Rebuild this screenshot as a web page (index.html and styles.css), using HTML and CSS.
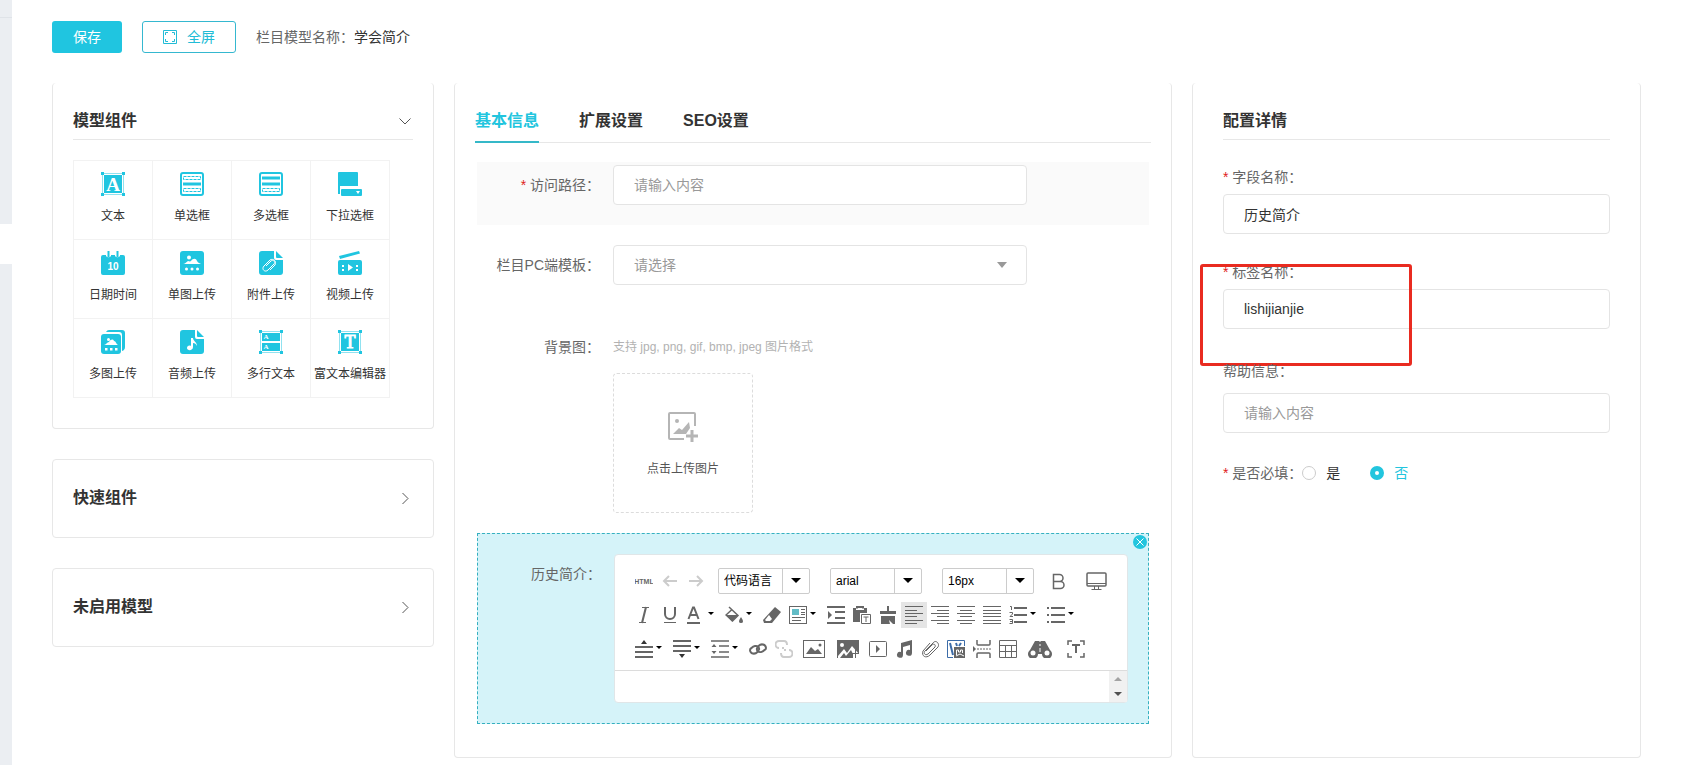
FILE: index.html
```html
<!DOCTYPE html>
<html lang="zh-CN">
<head>
    <meta charset="UTF-8">
    <meta name="viewport" content="width=device-width, initial-scale=1.0">
    <title>栏目模型</title>
    <link rel="stylesheet" href="styles.css">
</head>
<body>
    <div class="side">
        <div class="side-head"></div>
        <div class="side-menu"></div>
        <div class="side-current"></div>
        <div class="side-rest"></div>
    </div>

    <div class="page">
        <div class="topbar">
            <button class="btn btn-primary">保存</button>
            <button class="btn btn-outline">
                <svg width="14" height="14" viewBox="0 0 14 14" fill="none" stroke="currentColor"><path d="M.5.5h13v13H.5z"/><path d="M2.500 5V2.500H5M9 2.500h2.500V5M11.500 9v2.500H9M5 11.500H2.500V9"/></svg>
                全屏
            </button>
            <div class="model-name">栏目模型名称：<span>学会简介</span></div>
        </div>

        <div class="columns">
            <!-- 左侧组件 -->
            <div class="left">
                <div class="card card-cut">
                    <div class="card-title line">
                        <h3>模型组件</h3>
                        <svg width="14" height="14" viewBox="0 0 14 14" fill="none" stroke="#555"><path d="M.5 4.500 6 10l5.500-5.500"/></svg>
                    </div>
                    <ul class="widgets">
                        <li>
                            <svg viewBox="0 0 24 24"><path class="dots" d="M1.500 1.500h21v21h-21z"/><path d="M0 0h3v3H0zM21 0h3v3h-3zM0 21h3v3H0zM21 21h3v3h-3zM3 3h18v18H3z"/><text x="12" y="19" class="serif">A</text></svg>
                            <span>文本</span>
                        </li>
                        <li>
                            <svg viewBox="0 0 24 24"><rect class="ln" x="1" y="1" width="22" height="22" rx="2"/><path class="dash" d="M3.500 4.500h17v3h-17zM3.500 16.500h17v3h-17z"/><path d="M3 10.500h18v3H3z"/></svg>
                            <span>单选框</span>
                        </li>
                        <li>
                            <svg viewBox="0 0 24 24"><rect class="ln" x="1" y="1" width="22" height="22" rx="2"/><path class="dash" d="M3.500 16.500h17v3h-17z"/><path d="M3 4.500h18v3H3zM3 10.500h18v3H3z"/></svg>
                            <span>多选框</span>
                        </li>
                        <li>
                            <svg viewBox="0 0 24 24"><path d="M0 1q0-1 1-1h18q1 0 1 1v13H2v8H0zM4 17h19q1 0 1 1v5q0 1-1 1H4q-1 0-1-1v-5q0-1 1-1z"/><path class="w" d="M18 19h4l-2 3z"/></svg>
                            <span>下拉选框</span>
                        </li>
                        <li>
                            <svg viewBox="0 0 24 24"><path d="M2 4h3v1a3 3 0 0 0 5 0V4h4v1a3 3 0 0 0 5 0V4h3q2 0 2 2v16q0 2-2 2H2q-2 0-2-2V6q0-2 2-2z"/><path d="M6.500 0h2v6h-2zM15.500 0h2v6h-2z"/><text x="12" y="19" class="num">10</text></svg>
                            <span>日期时间</span>
                        </li>
                        <li>
                            <svg viewBox="0 0 24 24"><rect width="24" height="24" rx="3"/><path class="w" d="M3 13c2 0 3-2 5-3 1 0 2 1 3 0 2-3 5-3 6 0 1 2 3 2 4 3zM7 6.500a2 2 0 1 0 4 0 2 2 0 0 0-4 0M5 18a1.500 1.500 0 1 0 3 0 1.500 1.500 0 0 0-3 0M10.500 18a1.500 1.500 0 1 0 3 0 1.500 1.500 0 0 0-3 0M16 18a1.500 1.500 0 1 0 3 0 1.500 1.500 0 0 0-3 0"/></svg>
                            <span>单图上传</span>
                        </li>
                        <li>
                            <svg viewBox="0 0 24 24"><path d="M3 0h12v7q0 2 2 2h7v12q0 3-3 3H3q-3 0-3-3V3q0-3 3-3zM17 0l7 7h-6q-1 0-1-1z"/><path class="wl" d="m7 15 5-5c2-2 5 1 3 3l-6 6c-3 3-7-1-4-4l6-6c3-2 7 1 5 5l-5 5"/></svg>
                            <span>附件上传</span>
                        </li>
                        <li>
                            <svg viewBox="0 0 24 24"><path d="M1 5 21 0l1 2.500L2 8zM2 9h20q2 0 2 2v11q0 2-2 2H2q-2 0-2-2V11q0-2 2-2z"/><path class="w" d="m10 13 5 3.500-5 3.500zM4 14h2v2H4zM4 18h2v2H4zM18 14h2v2h-2zM18 18h2v2h-2z"/></svg>
                            <span>视频上传</span>
                        </li>
                        <li>
                            <svg viewBox="0 0 24 24"><path d="M5 2q1-2 3-2h13q3 0 3 3v14q0 3-3 4V5q0-3-3-3z"/><rect y="4" width="20" height="20" rx="3"/><path class="w" d="M3 15c2 0 3-3 5-3 2-3 4-3 5-1 2 0 2 3 4 4zM6 9.500a1.500 1.500 0 1 0 3 0 1.500 1.500 0 0 0-3 0M4 18h2.500v2.500H4zM9 18h2.500v2.500H9zM14 18h2.500v2.500H14z"/></svg>
                            <span>多图上传</span>
                        </li>
                        <li>
                            <svg viewBox="0 0 24 24"><path d="M3 0h12v7q0 2 2 2h7v12q0 3-3 3H3q-3 0-3-3V3q0-3 3-3zM17 0l7 7h-6q-1 0-1-1z"/><path class="w" d="M11 8h2c0 3 4 4 4 8-1-2-2-3-4-3v4c0 4-6 4-6 1 0-2 2-3 4-2z"/></svg>
                            <span>音频上传</span>
                        </li>
                        <li>
                            <svg viewBox="0 0 24 24"><path class="dots" d="M1.500 1.500h21v21h-21z"/><path d="M0 0h3v3H0zM21 0h3v3h-3zM0 21h3v3H0zM21 21h3v3h-3zM3 3h18v8H3zM3 13h18v8H3z"/><text x="7" y="9" class="mini">A</text><text x="7" y="19" class="mini">A</text></svg>
                            <span>多行文本</span>
                        </li>
                        <li>
                            <svg viewBox="0 0 24 24"><path class="dots" d="M1.500 1.500h21v21h-21z"/><path d="M0 0h3v3H0zM21 0h3v3h-3zM0 21h3v3H0zM21 21h3v3h-3zM3 3h18v18H3z"/><text x="12" y="18" class="serif thin">T</text></svg>
                            <span>富文本编辑器</span>
                        </li>
                    </ul>
                </div>

                <div class="card card-fold">
                    <div class="card-title">
                        <h3>快速组件</h3>
                        <svg width="14" height="14" viewBox="0 0 14 14" fill="none" stroke="#555"><path d="M3.500 2 9 7.500 3.500 13"/></svg>
                    </div>
                </div>
                <div class="card card-fold">
                    <div class="card-title">
                        <h3>未启用模型</h3>
                        <svg width="14" height="14" viewBox="0 0 14 14" fill="none" stroke="#555"><path d="M3.500 2 9 7.500 3.500 13"/></svg>
                    </div>
                </div>
            </div>

            <!-- 中间表单 -->
            <div class="card card-cut middle">
                <div class="tabs">
                    <a href="#" class="tab active">基本信息</a>
                    <a href="#" class="tab">扩展设置</a>
                    <a href="#" class="tab">SEO设置</a>
                </div>

                <div class="row row-gray">
                    <label for="path"><i>*</i> 访问路径：</label>
                    <input class="field" type="text" id="path" placeholder="请输入内容">
                </div>

                <div class="row row-select">
                    <label for="tpl">栏目PC端模板：</label>
                    <div class="select">
                        <select class="field" id="tpl">
                            <option>请选择</option>
                        </select>
                    </div>
                </div>

                <div class="row row-upload">
                    <label for="upload">背景图：</label>
                    <div>
                        <p class="tip">支持 jpg, png, gif, bmp, jpeg 图片格式</p>
                        <button class="upload" id="upload">
                            <svg width="32" height="32" viewBox="0 0 32 32"><path d="M28 15V3q0-1-1-1H3Q2 2 2 3v24q0 1 1 1h14" fill="none" stroke="#b5b5b5" stroke-width="2"/><circle cx="10" cy="10" r="2" fill="#b5b5b5"/><path d="m6 23 6-6 3 2 7-8 1 6-4 6z" fill="#b5b5b5"/><path d="M25 19v12M19 25h12" stroke="#b5b5b5" stroke-width="3"/></svg>
                            点击上传图片
                        </button>
                    </div>
                </div>

                <div class="row row-active">
                    <button class="close" aria-label="删除">
                        <svg width="14" height="14" viewBox="0 0 14 14"><circle cx="7" cy="7" r="7" fill="#22c5de"/><path d="m3.500 3.500 7 7m0-7-7 7" stroke="#fff"/></svg>
                    </button>
                    <label for="content">历史简介：</label>
                    <div class="editor">
                        <div class="toolbar">
                            <div class="tools first">
                                <button><svg viewBox="0 0 18 18"><text x="9" y="12" class="t-html">HTML</text></svg></button>
                                <button class="off"><svg viewBox="0 0 18 18"><path class="s2" d="M16 9H3M8 4 3 9l5 5"/></svg></button>
                                <button class="off"><svg viewBox="0 0 18 18"><path class="s2" d="M2 9h13M10 4l5 5-5 5"/></svg></button>
                                <div class="combo"><select aria-label="代码语言"><option>代码语言</option></select></div>
                                <div class="combo"><select aria-label="字体"><option>arial</option></select></div>
                                <div class="combo"><select aria-label="字号"><option>16px</option></select></div>
                                <button class="wide"><svg viewBox="0 0 18 18"><path class="s15" d="M3.500 2.500h6a3.500 3.500 0 0 1 0 7h-6zM3.500 9.500h7a3.500 3.500 0 0 1 0 7h-7z"/></svg></button>
                                <button class="wide big"><svg viewBox="0 0 22 18"><rect class="s15" x="1" y="1" width="19" height="13" rx="1"/><path class="s1" d="M1 11.500h19M8.500 14v3M12.500 14v3M5.500 17.500h10"/></svg></button>
                            </div>
                            <div class="tools">
                                <button><svg viewBox="0 0 18 18"><path class="s1" d="M7 1.500h7M4 16.500h7"/><path class="s2" d="M11 1 7 17"/></svg></button>
                                <button><svg viewBox="0 0 18 18"><path class="s2" d="M4 1v7a5 5 0 0 0 10 0V1"/><path class="s1" d="M3 16.500h12"/></svg></button>
                                <button class="drop"><svg viewBox="0 0 18 18"><path class="s2" d="M1.500 13 6 1.500h1L11.500 13M3 9h7"/><path class="s2" d="M0 17h13"/></svg></button>
                                <button class="drop"><svg viewBox="0 0 18 18"><path class="s15" d="m4 1 9 8.500L7.500 15 1 9l6-5.500"/><path d="M1 9h12l-6 6.500zM16 11q4 6 0 6t0-6z"/></svg></button>
                                <button><svg viewBox="0 0 18 18"><path d="m12 1 6 5-9 11H1l-1-3z"/><path d="m6 9 3 4-2 2H3l-1-1z" fill="#fff"/></svg></button>
                                <button class="drop"><svg viewBox="0 0 18 18"><rect class="s1" x=".5" y=".5" width="17" height="17"/><path d="M3 3h7v6H3z" fill="#62bcc6"/><path class="s1" d="M12 3.500h4M12 6.500h4M12 8.500h4M3 11.500h13M3 14.500h9"/></svg></button>
                                <button><svg viewBox="0 0 18 18"><path class="s2" d="M0 1h18M8 6h10M8 12h10M0 17h18"/><path d="m1 5 4 4-4 4z"/></svg></button>
                                <button><svg viewBox="0 0 18 18"><path d="M0 2h3v2h8V2h3v5H8v9H0z"/><path class="s2" d="M4 2.500V1h6v1.500"/><path d="M7 7h11v11H7z" fill="#fff"/><path class="s1" d="M8.500 8.500h9v9h-9zM10.500 11h5M13 11v5"/></svg></button>
                                <button><svg viewBox="0 0 18 18"><path d="M8 0h2v5h7v3H1V5h7zM2 10h14v8h-2l-4-4 1 4H2z"/></svg></button>
                                <button class="on"><svg viewBox="0 0 18 18"><path class="s1" d="M0 .5h18M0 4.500h12M0 7.500h18M0 10.500h12M0 14.500h18M0 17.500h12"/></svg></button>
                                <button><svg viewBox="0 0 18 18"><path class="s1" d="M0 .5h18M6 4.500h12M0 7.500h18M6 10.500h12M0 14.500h18M6 17.500h12"/></svg></button>
                                <button><svg viewBox="0 0 18 18"><path class="s1" d="M0 .5h18M3 4.500h12M0 7.500h18M3 10.500h12M0 14.500h18M3 17.500h12"/></svg></button>
                                <button><svg viewBox="0 0 18 18"><path class="s1" d="M0 .5h18M0 4.500h18M0 7.500h18M0 10.500h18M0 14.500h18M0 17.500h18"/></svg></button>
                                <button class="drop"><svg viewBox="0 0 18 18"><path class="s2" d="M5 2h13M5 9h13M5 16h13"/><path class="s1" d="M1 .5h1.500V4M.5 6.500h3v1.500L1 10.500h3M.5 13.500h3v4h-3M1 15.500h2"/></svg></button>
                                <button class="drop"><svg viewBox="0 0 18 18"><path class="s2" d="M0 2h2M0 9h2M0 16h2M4 2h14M4 9h14M4 16h14"/></svg></button>
                            </div>
                            <div class="tools">
                                <button class="drop dark"><svg viewBox="0 0 18 18"><path d="m9 0 3 4H6z"/><path class="s15" d="M0 7h18M0 12h18M0 17h18"/></svg></button>
                                <button class="drop dark"><svg viewBox="0 0 18 18"><path d="m9 18 3-4H6z"/><path class="s15" d="M0 1h18M0 6h18M0 11h18"/></svg></button>
                                <button class="drop"><svg viewBox="0 0 18 18"><path class="s15" d="M0 1h18M8 6h10M8 12h10M0 17h18"/><path d="m3 4 2.500 3h-5zM3 14l2.500-3h-5z"/></svg></button>
                                <button><svg viewBox="0 0 18 18"><path class="s2" d="M8.500 12c-2 2-4 2-6 1-2-2-2-4 0-5 2-2 5-3 7-1 1 2 1 3-1 4M9.500 6c2-2 4-2 6-1 2 2 2 4 0 5-2 2-5 3-7 1-1-2-1-3 1-4"/></svg></button>
                                <button class="off"><svg viewBox="0 0 18 18"><path class="s2" d="M4 8a3.500 3.500 0 0 1 0-7h5q3 0 3 4M9 8H7M14 10a3.500 3.500 0 0 1 0 7H9q-3 0-3-4M9 10h2"/></svg></button>
                                <button class="wide big"><svg viewBox="0 0 22 18"><rect class="s1" x=".5" y=".5" width="21" height="17"/><path d="m3 14 5-7 4 4 3-2 4 5z"/><circle cx="17" cy="5" r="1.500"/></svg></button>
                                <button class="wide big"><svg viewBox="0 0 22 18"><path d="M0 0h22v18H0z"/><path d="m1 16 6-7 3 4 5-7 7 8v4h-6v-4l-2-4-5 6-2-3-4 5H1zM3 5a2 2 0 1 0 4 0 2 2 0 0 0-4 0" fill="#fff"/><path class="s1" d="M18.500 9v9M14 13.500h8"/></svg></button>
                                <button><svg viewBox="0 0 18 18"><rect class="s1" x=".5" y="1.500" width="17" height="15" rx="1"/><path d="m7 5 4 4-4 4z"/></svg></button>
                                <button><svg viewBox="0 0 18 18"><path d="M6 3 17 0v13a3 3 0 1 1-2-3V5L8 7v8a3 3 0 1 1-2-3z"/></svg></button>
                                <button><svg viewBox="0 0 18 18"><path class="s1" d="m5 11 6-6c2-2 4 0 3 2l-7 7c-3 2-5-1-3-3l8-8c3-4 7 1 5 4l-8 8c-4 4-9 1-7-4l7-8"/></svg></button>
                                <button><svg viewBox="0 0 18 18"><path d="M17.500 6V.5H.5v17H6" fill="none" stroke="#3c6ca8"/><path d="m3 3 3 12M9 3l1 3M12 6l2-3" fill="none" stroke="#3c6ca8" stroke-width="2"/><path d="M7 7h11v11H7z"/><path class="hole" d="M9.500 15V10h2v2h2v-2h2v3M9 16l4-2 4 2"/></svg></button>
                                <button><svg viewBox="0 0 18 18"><path class="s15" d="M4 0v4q0 1 1 1h11q1 0 1-1V0M4 18v-4q0-1 1-1h11q1 0 1 1v4"/><path d="m0 6 3 3-3 3z"/><path class="s1" d="M4 9h2M7 9h2M10 9h2M13 9h2M16 9h2"/></svg></button>
                                <button><svg viewBox="0 0 18 18"><path class="s1" d="M.5.5h17v17H.5zM.5 5.500h17M.5 11.500h17M6.500 5.500v12M12.500 5.500v12"/></svg></button>
                                <button class="drop-w big"><svg viewBox="0 0 24 18"><path d="M7 1h4l1 1 1-1h4l5 9a5 5 0 1 1-8 4h-4a5 5 0 1 1-8-4z"/><circle cx="5" cy="13" r="2.500" fill="#fff"/><circle cx="19" cy="13" r="2.500" fill="#fff"/><path class="hole" d="M12 4v2M12 8v4"/></svg></button>
                                <button class="wide"><svg viewBox="0 0 18 18"><path class="s15" d="M1 5V1h4M13 1h4v4M17 13v4h-4M5 17H1v-4"/><path class="s2" d="M5 5h8M9 5v8"/></svg></button>
                            </div>
                        </div>
                        <div class="editor-body">
                            <textarea id="content"></textarea>
                            <div class="scroll"><span class="up"></span><span class="down"></span></div>
                        </div>
                    </div>
                </div>
            </div>

            <!-- 右侧配置 -->
            <div class="card card-cut right">
                <div class="card-title line"><h3>配置详情</h3></div>
                <div class="item">
                    <label for="fname"><i>*</i> 字段名称：</label>
                    <input class="field" type="text" id="fname" value="历史简介">
                </div>
                <div class="item">
                    <label for="tag"><i>*</i> 标签名称：</label>
                    <input class="field" type="text" id="tag" value="lishijianjie">
                    <div class="mark"></div>
                </div>
                <div class="item item-help">
                    <label for="help">帮助信息：</label>
                    <input class="field" type="text" id="help" placeholder="请输入内容">
                </div>
                <div class="radios">
                    <span><i>*</i> 是否必填：</span>
                    <label><input type="radio" name="must">是</label>
                    <label><input type="radio" name="must" checked><b>否</b></label>
                </div>
            </div>
        </div>
    </div>
</body>
</html>
```

FILE: styles.css
```css
* {
    box-sizing: border-box;
}

body {
    margin: 0;
    display: flex;
    min-height: 100vh;
    font-family: "Liberation Sans", "Noto Sans CJK SC", sans-serif;
    font-size: 14px;
    line-height: 20px;
    color: #333;
    background-color: #fff;
}

h3, p, ul {
    margin: 0;
    padding: 0;
}

i {
    font-style: normal;
    color: #e02020;
}

button, input, select, textarea {
    font-family: inherit;
    margin: 0;
}

button {
    cursor: pointer;
}

/* 左侧边条 */
.side {
    width: 12px;
    flex: none;
    display: flex;
    flex-direction: column;
}

.side-head {
    height: 18px;
    background-color: #ebeef2;
    border-bottom: 1px solid #dfe3e8;
}

.side-menu {
    height: 206px;
    background-color: #ebeef2;
}

.side-current {
    height: 40px;
}

.side-rest {
    flex: 1;
    background-color: #ebeef2;
}

.page {
    flex: 1;
    min-width: 0;
    padding: 21px 40px 0;
}

.topbar {
    display: flex;
    align-items: center;
    margin-bottom: 30px;
}

.btn {
    height: 32px;
    padding: 0 20px;
    border-radius: 3px;
    font-size: 14px;
    line-height: 20px;
}

.btn-primary {
    width: 70px;
    background-color: #20c5e0;
    border: none;
    color: #fff;
    margin-right: 20px;
}

.btn-outline {
    display: flex;
    align-items: center;
    gap: 10px;
    width: 94px;
    background-color: #fff;
    border: 1px solid #35b8d0;
    color: #22bcd6;
    margin-right: 20px;
    white-space: nowrap;
}

.model-name {
    color: #666;
}

.model-name span {
    color: #333;
}

.columns {
    display: flex;
    gap: 20px;
}

.card {
    border: 1px solid #e7e7e7;
    border-radius: 4px;
    padding: 0 20px;
}

.card-cut {
    border-top: none;
    padding-top: 20px;
}

.left {
    width: 382px;
    flex: none;
}

.left .card-cut {
    padding-bottom: 30px;
}

.card-fold {
    margin-top: 30px;
    height: 79px;
    padding-top: 20px;
}

.card-title {
    display: flex;
    justify-content: space-between;
    align-items: center;
    height: 36px;
}

.card-title.line {
    border-bottom: 1px solid #e7e7e7;
    height: 37px;
}

.card-title h3 {
    font-size: 16px;
    line-height: 24px;
}

.widgets {
    list-style: none;
    display: grid;
    grid-template-columns: repeat(4, 79px);
    width: 317px;
    margin-top: 20px;
    border-top: 1px solid #f2f2f2;
    border-left: 1px solid #f2f2f2;
}

.widgets li {
    height: 79px;
    border-right: 1px solid #f2f2f2;
    border-bottom: 1px solid #f2f2f2;
    display: flex;
    flex-direction: column;
    align-items: center;
    padding-top: 11px;
    gap: 10px;
    font-size: 12px;
    white-space: nowrap;
}

.widgets svg {
    width: 24px;
    height: 24px;
    flex: none;
    fill: #20c5e0;
}

.widgets .w {
    fill: #fff;
}

.widgets .wl {
    fill: none;
    stroke: #fff;
}

.widgets .ln {
    fill: none;
    stroke: #20c5e0;
    stroke-width: 2;
}

.widgets .dash {
    fill: none;
    stroke: #20c5e0;
    stroke-dasharray: 3 1;
}

.widgets .dots {
    fill: none;
    stroke: #20c5e0;
    stroke-dasharray: 1 1;
}

.widgets text {
    fill: #fff;
    text-anchor: middle;
    font-weight: bold;
}

.serif {
    font-family: "Liberation Serif", serif;
    font-size: 19px;
}

.widgets .thin {
    font-size: 18px;
    font-weight: normal;
    stroke: #fff;
}

.num {
    font-size: 10px;
}

.mini {
    font-family: "Liberation Serif", serif;
    font-size: 7px;
}

/* 中间 */
.middle {
    flex: 1;
    min-width: 0;
    padding-bottom: 33px;
}

.tabs {
    display: flex;
    gap: 40px;
    height: 40px;
    border-bottom: 1px solid #e7e7e7;
    margin-bottom: 19px;
}

.tab {
    height: 40px;
    font-size: 16px;
    font-weight: bold;
    line-height: 36px;
    color: #333;
    text-decoration: none;
}

.tab.active {
    color: #22c5de;
    border-bottom: 2px solid #35b8c8;
}

.row {
    position: relative;
    display: flex;
    margin: 0 2px;
}

.row > label {
    width: 123px;
    margin-right: 13px;
    flex: none;
    text-align: right;
    color: #666;
    line-height: 40px;
    white-space: nowrap;
}

.field {
    display: block;
    width: 100%;
    height: 40px;
    border: 1px solid #e4e4e4;
    border-radius: 4px;
    background-color: #fff;
    padding: 0 20px;
    font-size: 14px;
    color: #333;
}

.field::placeholder {
    color: #999;
}

.row .field {
    width: 414px;
}

.row-gray {
    background-color: #fafafa;
    padding: 3px 0 20px;
}

.row-select {
    margin-top: 20px;
}

.select {
    position: relative;
}

.select select {
    appearance: none;
    color: #999;
}

.select::after {
    content: "";
    position: absolute;
    right: 20px;
    top: 17px;
    border: 5px solid transparent;
    border-top: 6px solid #999;
    border-bottom: none;
    pointer-events: none;
}

.row-upload {
    margin-top: 42px;
}

.tip {
    font-size: 12px;
    line-height: 40px;
    color: #b2b2b2;
    margin-bottom: 6px;
}

.upload {
    display: flex;
    flex-direction: column;
    align-items: center;
    justify-content: center;
    gap: 16px;
    width: 140px;
    height: 140px;
    padding: 4px 0 0;
    background-color: #fff;
    border: 1px dashed #dcdcdc;
    border-radius: 4px;
    font-size: 12px;
    line-height: 20px;
    color: #555;
}

.row-active {
    margin-top: 20px;
    padding: 20px;
    padding-left: 0;
    background-color: #d5f3f9;
    border: 1px dashed #35b0c0;
}

.close {
    position: absolute;
    top: 1px;
    right: 1px;
    width: 14px;
    height: 14px;
    padding: 0;
    border: none;
    background: none;
}

.close svg {
    display: block;
}

.editor {
    flex: 1;
    min-width: 0;
    border: 1px solid #e0e6e8;
    border-radius: 4px;
    background-color: #fff;
}

.toolbar {
    padding: 8px 16px 4px;
    border-bottom: 1px solid #dcdcdc;
}

.tools {
    display: flex;
    align-items: center;
    height: 34px;
}

.tools.first {
    height: 35px;
}

.tools button {
    width: 26px;
    height: 26px;
    flex: none;
    padding: 4px;
    border: none;
    background: none;
    display: flex;
    align-items: center;
}

.tools svg {
    width: 18px;
    height: 18px;
    flex: none;
    fill: #666;
    color: #666;
}

.tools .off svg {
    color: #ccc;
}

.tools .dark svg {
    fill: #333;
    color: #333;
}

.tools .big svg {
    width: 22px;
}

.tools button.on {
    background-color: #e5e5e5;
}

.tools button.drop {
    width: 38px;
}

.drop::after {
    content: "";
    margin-left: 3px;
    margin-bottom: 3px;
    border: 3px solid transparent;
    border-top-color: #000;
    border-bottom: none;
}

.tools button.wide {
    width: 34px;
    justify-content: center;
}

.tools button.drop-w {
    width: 38px;
    justify-content: center;
}

.tools .drop-w svg {
    width: 24px;
}

.tools .s1,
.tools .s15,
.tools .s2 {
    fill: none;
    stroke: currentColor;
}

.tools .s15 {
    stroke-width: 1.5;
}

.tools .s2 {
    stroke-width: 2;
}

.tools .hole {
    fill: none;
    stroke: #fff;
}

.t-html {
    font-size: 7px;
    font-weight: bold;
    text-anchor: middle;
}

.combo {
    position: relative;
    width: 92px;
    height: 26px;
    flex: none;
    margin-right: 20px;
}

.off + .combo {
    margin-left: 9px;
}

.combo select {
    appearance: none;
    width: 100%;
    height: 26px;
    padding: 0 5px;
    border: 1px solid #ccc;
    border-radius: 2px;
    background-color: #fff;
    font-size: 12px;
    color: #000;
}

.combo::before {
    content: "";
    position: absolute;
    right: 27px;
    top: 1px;
    bottom: 1px;
    border-left: 1px solid #ccc;
}

.combo::after {
    content: "";
    position: absolute;
    right: 9px;
    top: 10px;
    border: 5px solid transparent;
    border-top-color: #000;
    border-bottom: none;
    pointer-events: none;
}

.tools .combo + .wide {
    margin-left: -12px;
}

.first .wide + .wide {
    margin-left: 4px;
}

.editor-body {
    display: flex;
    height: 31px;
}

.editor-body textarea {
    flex: 1;
    min-width: 0;
    border: none;
    resize: none;
    background: none;
    overflow: hidden;
}

.scroll {
    width: 18px;
    background-color: #f1f1f1;
    display: flex;
    flex-direction: column;
    align-items: center;
    justify-content: space-around;
}

.up {
    border: 4px solid transparent;
    border-bottom-color: #a3a3a3;
    border-top: none;
}

.down {
    border: 4px solid transparent;
    border-top-color: #505050;
    border-bottom: none;
}

/* 右侧 */
.right {
    width: 449px;
    flex: none;
    padding-left: 30px;
    padding-right: 30px;
}

.item {
    position: relative;
    margin-top: 23px;
}

.item > label {
    display: block;
    color: #666;
    line-height: 20px;
    padding: 4px 0 7px;
}

.item + .item {
    margin-top: 24px;
}

.item-help > label {
    padding: 8px 0 12px;
}

.mark {
    position: absolute;
    left: -23px;
    top: 6px;
    width: 212px;
    height: 102px;
    border: 3px solid #e92b20;
    border-radius: 3px;
}

.radios {
    display: flex;
    align-items: center;
    margin-top: 30px;
    color: #666;
}

.radios label {
    display: flex;
    align-items: center;
    color: #333;
    margin-right: 30px;
}

.radios b {
    font-weight: normal;
    color: #22c5de;
}

.radios input {
    appearance: none;
    width: 14px;
    height: 14px;
    margin-right: 10px;
    border: 1px solid #ccc;
    border-radius: 50%;
    background-color: #fff;
}

.radios input:checked {
    border: 5px solid #22c5de;
}
```
